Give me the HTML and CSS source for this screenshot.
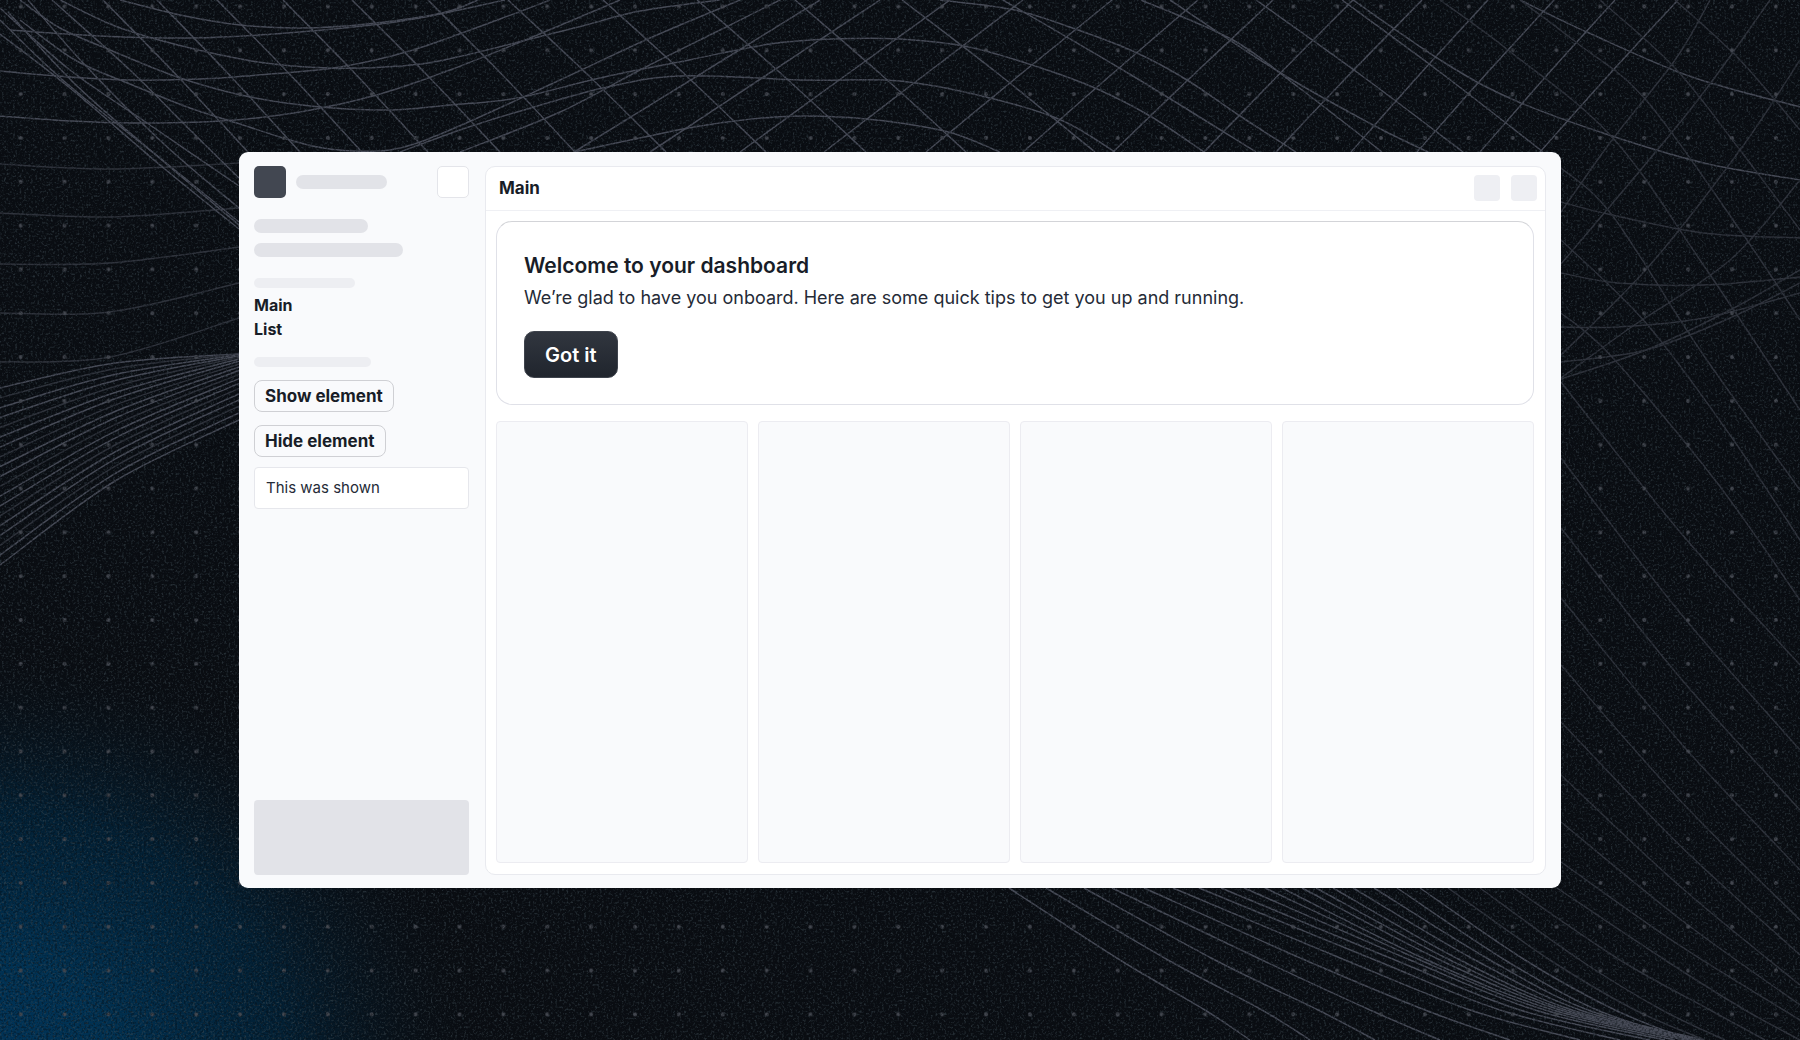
FILE: index.html
```
<!DOCTYPE html>
<html lang="en">
<head>
    <meta charset="utf-8">
    <title>Dashboard</title>
    <link rel="stylesheet" href="styles.css">
</head>
<body>
    <svg class="backdrop" viewBox="0 0 1800 1040" preserveAspectRatio="xMidYMid slice" aria-hidden="true">
        <defs>
            <radialGradient id="glow" gradientUnits="userSpaceOnUse" cx="0" cy="0" r="1" gradientTransform="translate(-20 1060) scale(510 420)">
                <stop offset="0" stop-color="#003358"/>
                <stop offset="0.25" stop-color="#003152"/>
                <stop offset="0.6" stop-color="#01233a" stop-opacity="0.85"/>
                <stop offset="1" stop-color="#0a0e13" stop-opacity="0"/>
            </radialGradient>
            <pattern id="dots" x="-1.2" y="-15.4" width="43.88" height="43.82" patternUnits="userSpaceOnUse">
                <circle cx="21.9" cy="21.9" r="2" fill="#43474f"/>
            </pattern>
            <filter id="grain" x="0" y="0" width="100%" height="100%" color-interpolation-filters="sRGB">
                <feTurbulence type="fractalNoise" baseFrequency="0.45" numOctaves="2" seed="4"/>
                <feColorMatrix values="0 0 0 0 0.22  0 0 0 0 0.27  0 0 0 0 0.3  3.4 0 0 0 -1.7"/>
            </filter>
            <filter id="shade" x="0" y="0" width="100%" height="100%" color-interpolation-filters="sRGB">
                <feTurbulence type="fractalNoise" baseFrequency="0.45" numOctaves="2" seed="9"/>
                <feColorMatrix values="0 0 0 0 0.03  0 0 0 0 0.05  0 0 0 0 0.07  5 0 0 0 -2.4"/>
            </filter>
        </defs>
        <rect width="1800" height="1040" fill="#0a0d12"/>
        <rect width="1800" height="1040" fill="url(#glow)"/>
        <rect width="1800" height="1040" filter="url(#grain)" opacity="0.6"/>
        <g id="mesh" class="mesh"></g>
        <rect width="1800" height="1040" fill="url(#dots)"/>
        <rect width="1800" height="1040" filter="url(#shade)" opacity="0.4"/>
    </svg>

    <div class="window">
        <aside class="sidebar">
            <div class="brand">
                <div class="logo"></div>
                <div class="bar bar-brand"></div>
                <div class="brand-action"></div>
            </div>
            <div class="bars">
                <div class="bar bar-short"></div>
                <div class="bar bar-long"></div>
            </div>
            <div class="bar bar-section"></div>
            <nav class="nav">
                <a href="#main">Main</a>
                <a href="#list">List</a>
            </nav>
            <div class="bar bar-section bar-wide"></div>
            <div class="actions">
                <button type="button" class="btn-outline" id="show">Show element</button>
                <button type="button" class="btn-outline" id="hide">Hide element</button>
            </div>
            <div class="shown" id="shown">This was shown</div>
            <div class="account"></div>
        </aside>

        <main class="panel" id="main">
            <header class="panel-header">
                <h1>Main</h1>
                <div class="tools">
                    <div class="tool"></div>
                    <div class="tool"></div>
                </div>
            </header>
            <div class="content">
                <section class="welcome" id="welcome">
                    <h2>Welcome to your dashboard</h2>
                    <p>We’re glad to have you onboard. Here are some quick tips to get you up and running.</p>
                    <button type="button" class="btn-dark" id="got-it">Got it</button>
                </section>
                <div class="columns" id="list">
                    <div class="column"></div>
                    <div class="column"></div>
                    <div class="column"></div>
                    <div class="column"></div>
                </div>
            </div>
        </main>
    </div>

    <script src="script.js"></script>
</body>
</html>
```
FILE: styles.css
```
* {
    box-sizing: border-box;
}

body {
    margin: 0;
    min-height: 100vh;
    padding: 152px 239px;
    display: flex;
    background-color: #0a0d12;
    color: #181d27;
    font-family: Inter, "Liberation Sans", sans-serif;
}

h1,
h2,
p {
    margin: 0;
}

button {
    font-family: inherit;
    cursor: pointer;
}

.backdrop {
    position: fixed;
    top: 0;
    left: 0;
    width: 100%;
    height: 100%;
    z-index: -1;
}

.mesh path {
    fill: none;
    stroke: #474b57;
    stroke-width: 1.5;
}

.mesh .faint {
    stroke: #30343d;
}

.window {
    flex: 1;
    display: flex;
    gap: 16px;
    padding: 14px 15px 13px;
    border-radius: 9px;
    background-color: #f9fafc;
}

/* Sidebar */
.sidebar {
    width: 215px;
    flex-shrink: 0;
    display: flex;
    flex-direction: column;
}

.brand {
    display: flex;
    align-items: center;
    gap: 10px;
    margin-bottom: 21px;
}

.logo,
.brand-action {
    width: 32px;
    height: 32px;
    border-radius: 5px;
}

.logo {
    background-color: #424751;
}

.brand-action {
    margin-left: auto;
    border: 1px solid #e4e5ea;
    background-color: #fff;
}

.bar {
    height: 14px;
    border-radius: 7px;
    background-color: #e2e3e8;
}

.bar-brand {
    width: 91px;
}

.bars {
    display: flex;
    flex-direction: column;
    gap: 10px;
    margin-bottom: 21px;
}

.bar-short {
    width: 114px;
}

.bar-long {
    width: 149px;
}

.bar-section {
    width: 101px;
    height: 10px;
    background-color: #edeef2;
}

.bar-wide {
    width: 117px;
}

.nav {
    display: flex;
    flex-direction: column;
    margin: 5px 0 16px;
}

.nav a {
    color: inherit;
    font-size: 16px;
    font-weight: 700;
    line-height: 24px;
    text-decoration: none;
}

.actions {
    display: flex;
    flex-direction: column;
    align-items: flex-start;
    gap: 13px;
    margin: 13px 0 10px;
}

.btn-outline {
    height: 32px;
    padding: 0 10px;
    border: 1px solid #cfd0d4;
    border-radius: 8px;
    background-color: transparent;
    color: #181d27;
    font-size: 17px;
    font-weight: 700;
}

.shown {
    height: 42px;
    padding: 0 11px;
    border: 1px solid #e6e7ec;
    border-radius: 4px;
    background-color: #fff;
    color: #252b37;
    font-size: 15px;
    line-height: 40px;
}

.account {
    height: 75px;
    margin-top: auto;
    border-radius: 4px;
    background-color: #e2e3e8;
}

/* Main panel */
.panel {
    flex: 1;
    display: flex;
    flex-direction: column;
    border: 1px solid #e9eaef;
    border-radius: 10px;
    background-color: #fff;
}

.panel-header {
    height: 44px;
    padding: 0 8px 2px 13px;
    display: flex;
    align-items: center;
    justify-content: space-between;
    border-bottom: 1px solid #eff0f4;
}

.panel-header h1 {
    font-size: 17px;
    font-weight: 700;
}

.tools {
    display: flex;
    gap: 11px;
}

.tool {
    width: 26px;
    height: 26px;
    border-radius: 4px;
    background-color: #eeeff3;
}

.content {
    flex: 1;
    display: flex;
    flex-direction: column;
    gap: 16px;
    padding: 10px 11px 11px 10px;
}

.welcome {
    padding: 30px 27px 26px;
    border: 1px solid #e0e1e8;
    border-top-color: #d3d4d8;
    border-radius: 16px;
}

.welcome h2 {
    font-size: 21px;
    font-weight: 600;
    line-height: 28px;
}

.welcome p {
    margin: 4px 0 19px;
    color: #252b37;
    font-size: 18px;
    line-height: 28px;
}

.btn-dark {
    height: 47px;
    padding: 0 20px;
    border: 1px solid #3e434c;
    border-radius: 10px;
    background: linear-gradient(#31363f, #20252d);
    color: #fff;
    font-size: 20px;
    font-weight: 600;
}

.columns {
    flex: 1;
    display: grid;
    grid-template-columns: repeat(4, 1fr);
    gap: 10px;
}

.column {
    border: 1px solid #ececf1;
    border-radius: 4px;
    background-color: #f9fafc;
}
```
FILE: script.js
```
const mesh = document.getElementById('mesh');

// Smooth curve through a list of points
function curve(points) {
    let d = `M${points[0]}`;
    for (let i = 0; i < points.length - 1; i++) {
        const a = points[i - 1] || points[i];
        const b = points[i];
        const c = points[i + 1];
        const e = points[i + 2] || c;
        d += `C${b[0] + (c[0] - a[0]) / 6} ${b[1] + (c[1] - a[1]) / 6} ` +
             `${c[0] - (e[0] - b[0]) / 6} ${c[1] - (e[1] - b[1]) / 6} ${c}`;
    }
    return d;
}

function draw(points, faint) {
    const path = document.createElementNS('http://www.w3.org/2000/svg', 'path');
    path.setAttribute('d', curve(points));
    if (faint) {
        path.setAttribute('class', 'faint');
    }
    mesh.appendChild(path);
}

// Waves over the top of the page
[
    [[120, 0], [180, 15], [240, 25], [300, 28], [367, 24], [442, 13], [478, 0]],
    [[10, 30], [100, 36], [190, 38], [287, 33], [402, 21], [505, 0]],
    [[60, 0], [115, 26], [178, 45], [258, 62], [330, 68], [400, 66], [453, 58], [574, 28], [640, 11], [720, 0]],
    [[0, 71], [70, 77], [132, 80], [200, 79], [270, 74], [340, 67], [413, 50], [500, 19], [550, 0]],
    [[0, 116], [70, 121], [132, 123], [220, 121], [300, 112], [380, 94], [450, 70], [530, 38], [620, 0]],
    [[20, 20], [75, 60], [130, 84], [190, 108], [240, 124], [290, 140], [330, 149], [390, 150], [450, 130], [560, 80], [650, 38], [740, 0]],
    [[20, 0], [60, 28], [110, 50], [180, 78], [250, 97], [320, 107], [390, 110], [450, 105], [517, 98], [600, 78], [689, 60], [770, 44], [832, 39], [900, 39], [969, 47], [1038, 67], [1095, 88], [1150, 116], [1204, 152]],
    [[400, 152], [460, 130], [517, 112], [603, 88], [680, 76], [804, 80], [900, 81], [986, 97], [1061, 120], [1115, 152]],
    [[460, 152], [560, 112], [640, 70], [720, 30], [780, 0]],
    [[574, 152], [640, 138], [700, 126], [775, 117], [840, 117], [900, 123], [952, 133], [1000, 152]],
    [[940, 0], [1015, 10], [1078, 30], [1135, 52], [1187, 80], [1240, 116], [1296, 152]],
    [[1141, 0], [1233, 40], [1302, 90], [1382, 152]],
    [[1170, 0], [1279, 72], [1373, 125], [1428, 152]],
    [[1353, 0], [1445, 63], [1514, 100], [1609, 135], [1704, 163], [1800, 180]],
    [[1520, 0], [1589, 33], [1692, 77], [1800, 107]]
].forEach((points) => draw(points));

// Falling lines, given as x at the top and x at the window edge
[
    [103, 248], [157, 300], [217, 362], [283, 428], [352, 500], [428, 575],
    [508, 666], [603, 766], [697, 866], [795, 966], [902, 1095],
    [1003, 1256], [1256, 1463], [1342, 1543]
].forEach(([top, bottom]) => draw([[top, 0], [(top + bottom) / 2, 74], [bottom, 152]]));

// Rising lines
[
    [574, 820], [650, 880], [740, 950],
    [824, 1023], [926, 1112], [1023, 1198], [1113, 1273], [1204, 1353], [1276, 1422],
    [1351, 1488], [1417, 1554], [1480, 1615], [1540, 1678]
].forEach(([bottom, top]) => draw([[bottom, 152], [(bottom + top) / 2 - 3, 78], [top, 0]]));

// Mesh on the right
[
    [[1561, 212], [1612, 140], [1675, 60], [1710, 0]],
    [[1561, 264], [1690, 110], [1770, 0]],
    [[1561, 355], [1650, 265], [1740, 150], [1800, 60]],
    [[1561, 378], [1630, 328], [1730, 260], [1800, 180]],
    [[1561, 168], [1612, 215], [1700, 350], [1800, 490]],
    [[1440, 0], [1508, 50], [1612, 137], [1700, 260], [1800, 410]],
    [[1520, 0], [1577, 43], [1646, 100], [1740, 230], [1800, 320]],
    [[1600, 0], [1675, 68], [1740, 150], [1800, 230]],
    [[1675, 0], [1740, 60], [1800, 130]],
    [[1561, 202], [1612, 215], [1704, 233], [1800, 238]],
    [[1561, 273], [1618, 283], [1704, 285], [1800, 277]],
    [[1561, 327], [1618, 327], [1704, 318], [1800, 293]],
    [[1561, 362], [1646, 350], [1730, 318], [1800, 283]],
    [[1561, 379], [1646, 350], [1730, 310], [1800, 270]],
    [[1561, 240], [1646, 323], [1730, 435], [1800, 540]],
    [[1561, 313], [1612, 357], [1715, 480], [1800, 600]]
].forEach((points) => draw(points, true));

[
    [382, 665], [458, 750], [528, 810], [598, 870], [665, 920], [722, 955], [775, 985], [822, 1005], [862, 1020]
].forEach(([left, right]) => draw([[1561, left], [1680, left + (right - left) * 0.53], [1800, right]], true));

// Left edge
[
    [164, 169, 163], [213, 217, 208], [264, 263, 247], [313, 312, 283], [362, 357, 318]
].forEach(([a, b, c]) => draw([[0, a], [110, b], [239, c]], true));

[
    [[52, 0], [130, 70], [185, 125], [239, 178]],
    [[28, 0], [85, 65], [165, 145], [239, 208]],
    [[0, 8], [70, 70], [150, 125], [239, 186]],
    [[0, 20], [65, 82], [160, 158], [239, 222]],
    [[0, 34], [70, 88], [160, 165], [239, 229]],
    [[8, 12], [75, 84], [150, 150], [239, 225]]
].forEach((points) => draw(points));

// Fan on the left
for (let i = 0; i < 19; i++) {
    const t = i / 18;
    draw([
        [0, 388 + 177 * t],
        [115, 363 + 118 * t - 16 * t * (1 - t)],
        [239, 354 + 66 * t * t]
    ], i % 3 === 1);
}

// Fan at the bottom right, given as x at 888, 960, 1010 and 1040
[
    [1009, 1120, 1205, 1250], [1046, 1168, 1262, 1310], [1084, 1215, 1318, 1375],
    [1112, 1262, 1370, 1440], [1144, 1305, 1425, 1510], [1173, 1345, 1470, 1580],
    [1199, 1375, 1500, 1620], [1221, 1395, 1520, 1650], [1244, 1410, 1535, 1665],
    [1265, 1420, 1545, 1675], [1282, 1427, 1553, 1685], [1302, 1440, 1560, 1692],
    [1316, 1450, 1566, 1698], [1333, 1460, 1572, 1700], [1353, 1475, 1580, 1702],
    [1374, 1490, 1588, 1704], [1397, 1505, 1597, 1690], [1420, 1525, 1615, 1690],
    [1448, 1550, 1635, 1705], [1480, 1580, 1662, 1725], [1514, 1620, 1710, 1765],
    [1557, 1665, 1745, 1800]
].forEach(([a, b, c, d], i) => draw([[a, 888], [b, 960], [c, 1010], [d, 1040]], i > 17));

document.getElementById('show').addEventListener('click', () => {
    document.getElementById('shown').hidden = false;
});

document.getElementById('hide').addEventListener('click', () => {
    document.getElementById('shown').hidden = true;
});

document.getElementById('got-it').addEventListener('click', () => {
    document.getElementById('welcome').hidden = true;
});
```
